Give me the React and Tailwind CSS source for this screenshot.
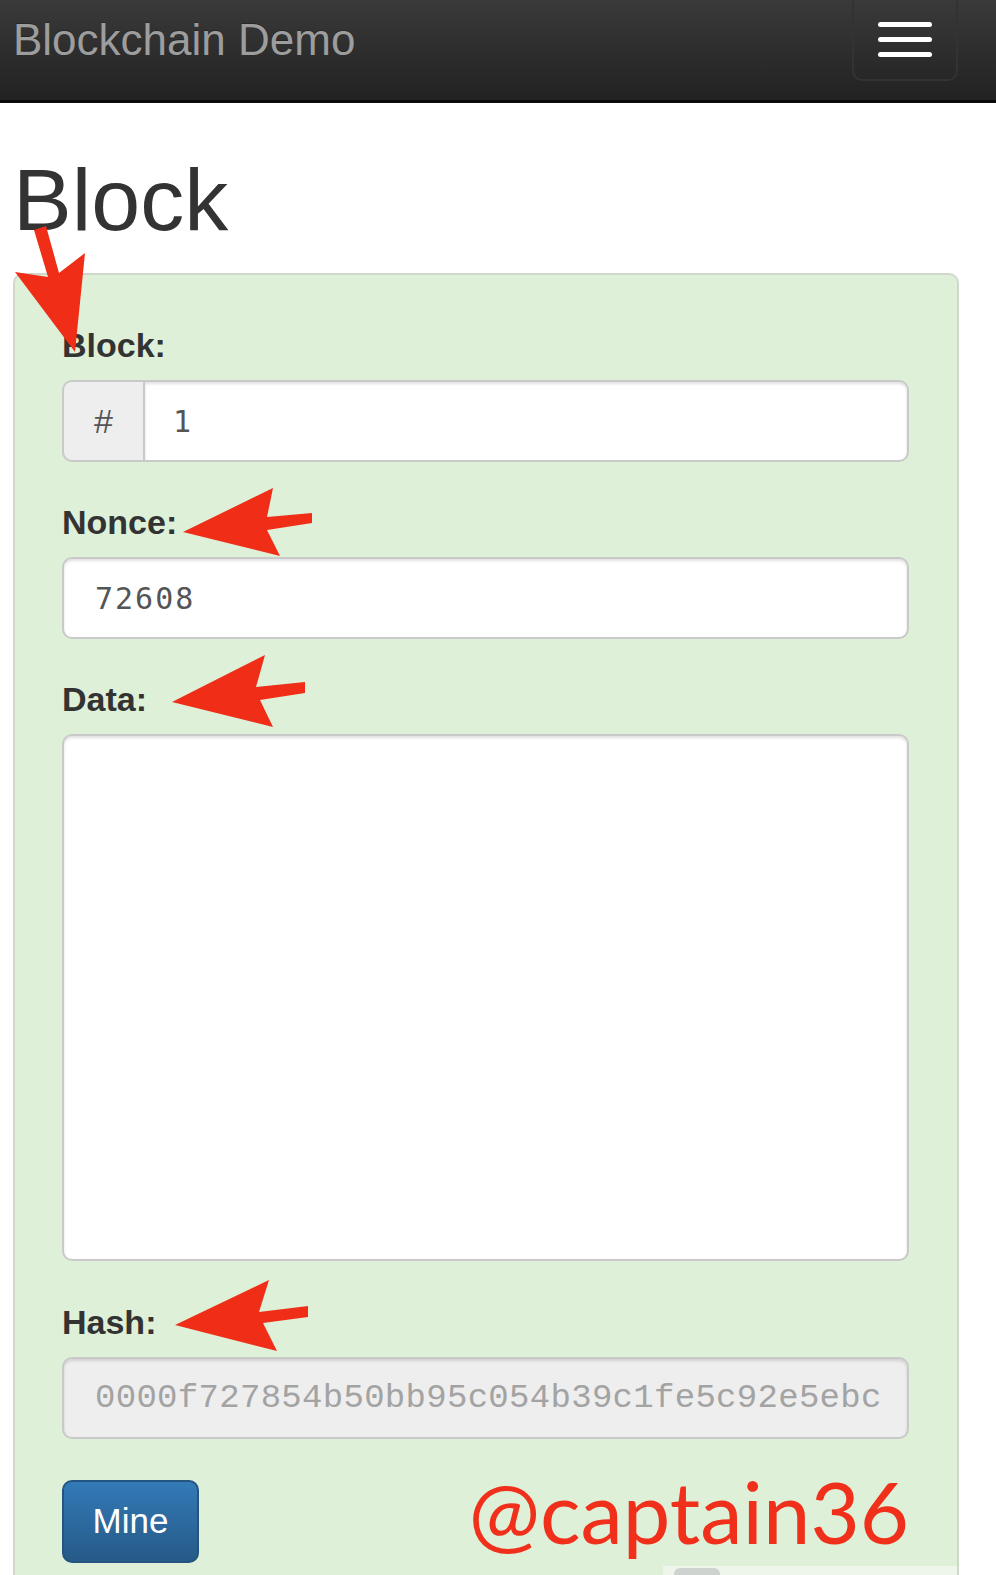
import React from "react";

const sans = { fontFamily: '"Liberation Sans", Arial, sans-serif' };

const Arrows = () => (
  <svg
    className="pointer-events-none absolute left-0 top-0"
    width="996"
    height="1575"
    viewBox="0 0 996 1575"
  >
    <g fill="#f02d17">
      <polygon points="34,230 46,226 59,273 85,253 75,352 15,272 48,277" />
      <polygon points="183,532 273,488 267,517 312,513 312,523 267,530 280,556" />
      <polygon points="172,702 265,655 256,687 305,682 305,693 260,700 273,727" />
      <polygon points="175,1325 269,1280 259,1312 308,1306 308,1317 263,1323 277,1351" />
    </g>
  </svg>
);

const Label = ({ children }) => (
  <label className="block h-[46px] mb-[12px] text-[34px] leading-[46px] font-bold text-[#333333]">
    {children}
  </label>
);

const inputBase =
  "w-full h-[82px] border-2 border-[#c9c9c9] rounded-[10px] shadow-[inset_0_2px_3px_rgba(0,0,0,0.12)] outline-none";

export default function App() {
  return (
    <div className="relative w-[996px] h-[1575px] overflow-hidden bg-white" style={sans}>
      <nav className="flex h-[103px] items-start justify-between border-b-[3px] border-[#0a0a0a] bg-gradient-to-b from-[#3a3a3a] to-[#222222] pl-[13px] pr-[38px]">
        <span className="mt-[14px] text-[44px] leading-[52px] text-[#9d9d9d] [text-shadow:0_-1px_0_rgba(0,0,0,0.25)]">
          Blockchain Demo
        </span>
        <button className="flex h-[81px] w-[106px] flex-col items-center justify-center gap-[10px] rounded-b-[10px] border-2 border-t-0 border-[#333333]">
          <span className="block h-[5px] w-[54px] rounded-full bg-white" />
          <span className="block h-[5px] w-[54px] rounded-full bg-white" />
          <span className="block h-[5px] w-[54px] rounded-full bg-white" />
        </button>
      </nav>

      <div className="px-[13px]">
        <h1 className="mt-[38px] h-[132px] text-[88px] leading-[118px] text-[#333333]">Block</h1>

        <div className="relative h-[1400px] w-[946px] rounded-t-[10px] border-2 border-b-0 border-[#d0d8cc] bg-[#dff0d8] pl-[47px] pr-[48px] pt-[47px]">
          <Label>Block:</Label>
          <div className="flex h-[82px] w-full">
            <span className="flex h-[82px] w-[81px] items-center justify-center rounded-l-[10px] border-2 border-r-0 border-[#c9c9c9] bg-[#eeeeee] text-[34px] text-[#555555]">
              #
            </span>
            <input
              readOnly
              value="1"
              className="h-[82px] flex-1 rounded-r-[10px] border-2 border-[#c9c9c9] bg-white pl-[28px] text-[30px] text-[#555555] shadow-[inset_0_2px_3px_rgba(0,0,0,0.12)] outline-none"
              style={{ fontFamily: '"DejaVu Sans Mono", monospace' }}
            />
          </div>

          <div className="mt-[37px]">
            <Label>Nonce:</Label>
            <input
              readOnly
              value="72608"
              className={inputBase + " bg-white pl-[31px] text-[30px] tracking-[2px] text-[#555555]"}
              style={{ fontFamily: '"DejaVu Sans Mono", monospace' }}
            />
          </div>

          <div className="mt-[37px]">
            <Label>Data:</Label>
            <textarea
              readOnly
              className="block h-[527px] w-full resize-none rounded-[10px] border-2 border-[#c9c9c9] bg-white shadow-[inset_0_2px_3px_rgba(0,0,0,0.12)] outline-none"
            />
          </div>

          <div className="mt-[38px]">
            <Label>Hash:</Label>
            <input
              readOnly
              value="0000f727854b50bb95c054b39c1fe5c92e5ebc"
              className={inputBase + " bg-[#eeeeee] pl-[31px] text-[34px] tracking-[0.3px] text-[#a3a3a3]"}
              style={{ fontFamily: '"Liberation Mono", "Courier New", monospace' }}
            />
          </div>

          <div className="mt-[41px] flex items-start justify-between">
            <button className="h-[83px] w-[137px] rounded-[10px] border-2 border-[#245580] bg-gradient-to-b from-[#337ab7] to-[#265a88] text-[35px] text-white">
              Mine
            </button>
            <span
              className="-mt-[22px] text-[85px] leading-[106px] text-[#f0301a]"
              style={{ fontFamily: 'Lato, "Noto Sans", sans-serif' }}
            >
              @captain36
            </span>
          </div>

          <div className="absolute right-0 top-[1291px] h-[20px] w-[294px] bg-[#eef6ec]">
            <div className="ml-[11px] mt-[2px] h-[10px] w-[46px] rounded-t-[6px] bg-[#cfd3cf]" />
          </div>
        </div>
      </div>

      <Arrows />
    </div>
  );
}
